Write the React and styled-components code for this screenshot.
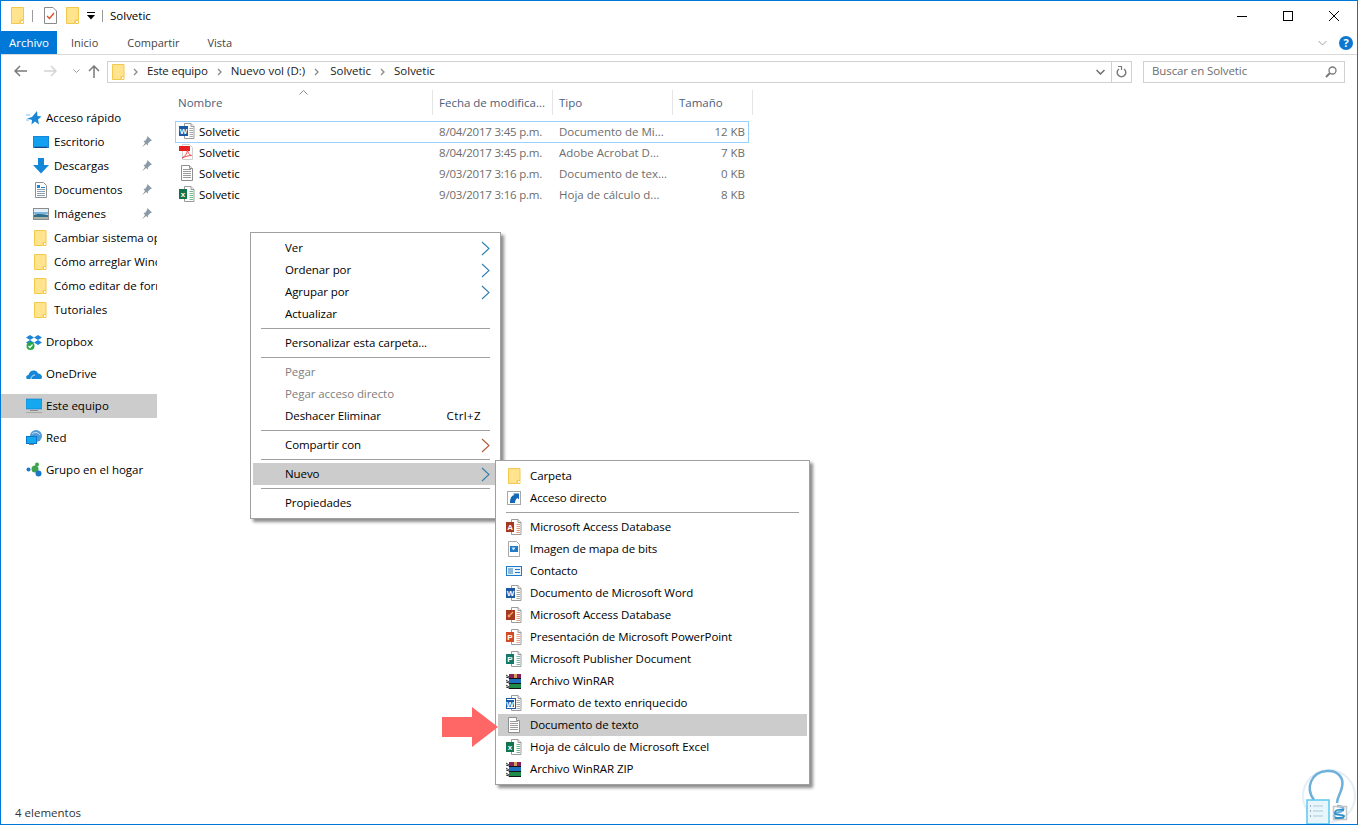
import React from 'react';
import styled, { createGlobalStyle } from 'styled-components';

const GlobalStyle = createGlobalStyle`
  html, body {
    margin: 0;
    padding: 0;
    background: #fff;
  }
  * {
    box-sizing: border-box;
  }
`;

const Window = styled.div`
  position: relative;
  width: 1358px;
  height: 825px;
  overflow: hidden;
  display: flex;
  flex-direction: column;
  background: #fff;
  border: 1px solid #0078d7;
  font-family: 'Open Sans', 'Noto Sans', sans-serif;
  font-size: 11.5px;
  color: #000;
`;

const TitleBar = styled.div`
  height: 30px;
  display: flex;
  align-items: center;
  flex: none;
  padding-bottom: 1px;
`;

const QuickItem = styled.span`
  display: flex;
  margin-left: ${(p) => p.$left || 0}px;
  flex: none;
`;

const QuickSep = styled.span`
  width: 1px;
  height: 12px;
  background: #9a9a9a;
  margin-left: ${(p) => p.$left}px;
`;

const Title = styled.span`
  margin-left: 7px;
  padding-bottom: 1px;
`;

const WinControls = styled.div`
  display: flex;
  margin-left: auto;
  align-self: stretch;
`;

const WinButton = styled.span`
  width: 46px;
  display: flex;
  align-items: center;
  justify-content: center;
`;

const RibbonTabs = styled.div`
  height: 24px;
  display: flex;
  align-items: center;
  flex: none;
  border-bottom: 1px solid #dadada;
`;

const ArchivoTab = styled.span`
  width: 56px;
  height: 23px;
  background: #0078d7;
  color: #fff;
  display: flex;
  align-items: center;
  justify-content: center;
`;

const RibbonTab = styled.span`
  color: #444;
  font-size: 11px;
  margin-left: ${(p) => p.$left}px;
`;

const RibbonEnd = styled.div`
  margin-left: auto;
  display: flex;
  align-items: center;
  gap: 12px;
  padding-right: 4px;
`;

const HelpDot = styled.span`
  width: 14px;
  height: 14px;
  border-radius: 50%;
  background: #0a78d0;
  color: #fff;
  font-weight: 700;
  font-size: 11px;
  line-height: 14px;
  text-align: center;
`;

const AddressRow = styled.div`
  height: 33px;
  flex: none;
  display: flex;
  align-items: flex-start;
  padding-top: 6px;
`;

const NavArrows = styled.div`
  width: 106px;
  height: 22px;
  flex: none;
  display: flex;
  align-items: center;
  padding-bottom: 2px;
`;

const NavArrow = styled.span`
  display: flex;
  margin-left: ${(p) => p.$left}px;
`;

const AddressBox = styled.div`
  width: 1025px;
  height: 22px;
  flex: none;
  border: 1px solid #d0d0d0;
  display: flex;
  align-items: center;
  padding: 0 0 1px 4px;
  gap: 9px;
`;

const AddressFolder = styled.span`
  display: flex;
  margin-right: -1px;
`;

const Crumb = styled.span`
  color: #1a1a1a;
  padding-bottom: 2px;
  margin-left: ${(p) => p.$left || 0}px;
  letter-spacing: ${(p) => (p.$tight ? '-0.2px' : '0')};
`;

const AddressEnd = styled.div`
  margin-left: auto;
  display: flex;
  align-items: center;
  align-self: stretch;
  margin-bottom: -1px;
`;

const AddressDrop = styled.span`
  width: 20px;
  display: flex;
  justify-content: center;
  padding-right: 2px;
`;

const AddressRefresh = styled.span`
  width: 20px;
  align-self: stretch;
  display: flex;
  align-items: center;
  justify-content: center;
  border-left: 1px solid #d0d0d0;
`;

const SearchBox = styled.div`
  width: 202px;
  height: 22px;
  flex: none;
  margin-left: 11px;
  border: 1px solid #d0d0d0;
  display: flex;
  align-items: center;
  justify-content: space-between;
  padding: 0 7px 1px 8px;
  color: #6d6d6d;
`;

const SearchText = styled.span`
  padding-bottom: 2px;
  letter-spacing: -0.1px;
`;

const Body = styled.div`
  flex: 1;
  min-height: 0;
  display: flex;
`;

const NavPane = styled.nav`
  width: 156px;
  flex: none;
  padding-top: 18px;
  overflow: hidden;
`;

const NavGroup = styled.div`
  margin-bottom: 8px;
`;

const NavRow = styled.div`
  height: 24px;
  display: flex;
  align-items: center;
  padding-left: ${(p) => (p.$sub ? 31 : 25)}px;
  background: ${(p) => (p.$selected ? '#cccccc' : 'transparent')};
`;

const NavIcon = styled.span`
  width: ${(p) => (p.$sub ? 17 : 15)}px;
  margin-right: 5px;
  display: flex;
  justify-content: center;
  flex: none;
`;

const NavLabel = styled.span`
  flex: 1;
  min-width: 0;
  overflow: hidden;
  white-space: nowrap;
  padding-bottom: 2px;
`;

const PinSlot = styled.span`
  display: flex;
  margin-right: 5px;
  margin-left: 4px;
  flex: none;
`;

const FilePane = styled.main`
  flex: 1;
  padding: 2px 0 0 15px;
`;

const HeaderRow = styled.div`
  position: relative;
  width: 581px;
  height: 25px;
  display: grid;
  grid-template-columns: 261px 120px 120px 80px;
`;

const HeaderCell = styled.div`
  border-right: 1px solid #e5e5e5;
  padding-left: 6px;
  line-height: 25px;
  color: #4c607a;
`;

const SortCaret = styled.svg`
  position: absolute;
  left: 127px;
  top: 0;
`;

const FileRows = styled.div`
  margin-top: 6px;
`;

const FileRow = styled.div`
  width: 574px;
  height: 22px;
  margin-left: 3px;
  margin-bottom: -1px;
  padding-bottom: 2px;
  display: grid;
  grid-template-columns: 257px 120px 120px 1fr;
  align-items: center;
  border: 1px solid ${(p) => (p.$selected ? '#99d1ff' : 'transparent')};
`;

const FileName = styled.div`
  display: flex;
  align-items: center;
  gap: 4px;
  padding-left: 3px;
`;

const FileMeta = styled.div`
  color: #6d6d6d;
  padding-left: 6px;
  white-space: nowrap;
  letter-spacing: ${(p) => (p.$tight ? '-0.2px' : '0')};
`;

const FileSize = styled.div`
  color: #6d6d6d;
  text-align: right;
  padding-right: 3px;
`;

const StatusBar = styled.div`
  height: 22px;
  flex: none;
  display: flex;
  align-items: center;
  padding: 0 0 2px 14px;
  color: #333;
`;

const Menu = styled.div`
  position: absolute;
  left: ${(p) => p.$x}px;
  top: ${(p) => p.$y}px;
  width: ${(p) => p.$w}px;
  background: #fff;
  border: 1px solid #a0a0a0;
  padding: 4px 0;
  box-shadow: 3px 3px 3px rgba(0, 0, 0, 0.45);
  letter-spacing: -0.08px;
`;

const MenuRow = styled.div`
  height: 22px;
  margin: 0 2px;
  display: flex;
  align-items: center;
  padding-left: ${(p) => (p.$icon ? 8 : 32)}px;
  background: ${(p) => (p.$active ? '#cccccc' : 'transparent')};
  color: ${(p) => (p.$disabled ? '#808080' : '#000')};
`;

const MenuText = styled.span`
  padding-bottom: 2px;
`;

const MenuIcon = styled.span`
  width: 16px;
  margin-right: 8px;
  display: flex;
  justify-content: center;
  flex: none;
`;

const Shortcut = styled.span`
  margin-left: auto;
  margin-right: 17px;
  padding-bottom: 2px;
  letter-spacing: 0.4px;
`;

const MenuChevron = styled.svg`
  margin-left: auto;
  margin-right: 8px;
`;

const MenuSep = styled.div`
  height: 1px;
  margin: 3px 10px;
  background: #a0a0a0;
`;

const CalloutArrow = styled.svg`
  position: absolute;
  left: 440px;
  top: 705px;
`;

const Watermark = styled.svg`
  position: absolute;
  right: 0;
  bottom: 0;
`;

/* drawn icons, 16 box unless noted */
const Svg = ({ w = 16, h = 16, children }) => (
  <svg width={w} height={h} viewBox={`0 0 ${w} ${h}`} style={{ flex: 'none', display: 'block' }}>
    {children}
  </svg>
);

const FolderIcon = ({ big }) => (
  <Svg w={13} h={big ? 17 : 16}>
    <path
      d={big ? 'M.5.5h12v12.5h-3.5v3.5h-8.5z' : 'M.5.5h11.5v12h-3v3h-8.5z'}
      fill="#ffe48d"
      stroke="#f3c84f"
    />
    <path d={big ? 'M9.5 16.5v-3h3v3z' : 'M9.5 15.5v-3h2.5v3z'} fill="#fff" stroke="#f3c84f" />
  </Svg>
);

const PageBase = ({ x = 5.5, lines = '#a8a8a8' }) => (
  <>
    <path d={`M${x} .5h6.5l3 3v12h-9.5z`} fill="#fff" stroke="#9c9c9c" />
    <path d={`M${x + 6.5} .5v3h3`} fill="#eee" stroke="#9c9c9c" />
    {[5, 7, 9, 11, 13].map((y) => (
      <rect key={y} x={x + 5} y={y} width={3.5} height={1} fill={lines} />
    ))}
  </>
);

const LetterTile = ({ fill, letter, y = 3, h = 10, w = 8 }) => (
  <>
    <rect x={0} y={y} width={w} height={h} fill={fill} />
    <text
      x={w / 2}
      y={y + h / 2 + 3}
      textAnchor="middle"
      fontFamily="Liberation Sans, sans-serif"
      fontWeight="700"
      fontSize="8"
      fill="#fff"
    >
      {letter}
    </text>
  </>
);

const WordIcon = () => (
  <Svg>
    <PageBase />
    <LetterTile fill="#1d5aa5" letter="W" w={9} />
  </Svg>
);

const ExcelIcon = () => (
  <Svg>
    <PageBase lines="#6fb98f" />
    <LetterTile fill="#12744a" letter="x" />
  </Svg>
);

const AccessIcon = () => (
  <Svg>
    <PageBase lines="#e59a78" />
    <LetterTile fill="#a5381f" letter="A" />
  </Svg>
);

const PowerPointIcon = () => (
  <Svg>
    <PageBase lines="#eba583" />
    <LetterTile fill="#d24a26" letter="P" />
  </Svg>
);

const AccessKeyIcon = () => (
  <Svg>
    <PageBase lines="#e59a78" />
    <rect x={0} y={3} width={9} height={10} fill="#a5381f" />
    <circle cx={3} cy={9} r={1.4} fill="#f4a460" />
    <path d="M4 8l3-3" stroke="#f4a460" strokeWidth="1.4" />
  </Svg>
);

const PublisherIcon = () => (
  <Svg>
    <PageBase lines="#7fb8a8" />
    <LetterTile fill="#0f7a6a" letter="P" />
  </Svg>
);

const RichTextIcon = () => (
  <Svg>
    <PageBase />
    <rect x={0.5} y={3.5} width={9} height={10} fill="#fff" stroke="#1d5aa5" />
    <LetterTile fill="#1d5aa5" letter="W" y={5} h={7} w={8} />
  </Svg>
);

const PdfIcon = () => (
  <Svg>
    <path d="M3.5.5h7l3 3v12h-10z" fill="#fff" stroke="#d0d0d0" />
    <rect x={0} y={2} width={11} height={5} fill="#e81f1f" />
    <path d="M3 14c3-1 5-5 5.500-8 .5 3 2 5 4 5.500-3 0-6 1-9.500 2.500z" fill="none" stroke="#ef4f4f" />
  </Svg>
);

const TextDocIcon = () => (
  <Svg>
    <path d="M2.500.5h8l3 3v12h-11z" fill="#fff" stroke="#8f8f8f" />
    <path d="M10.500.5v3h3" fill="#eee" stroke="#8f8f8f" />
    {[4, 6, 8, 10, 12].map((y) => (
      <rect key={y} x={4} y={y} width={8} height={1} fill="#9c9c9c" />
    ))}
  </Svg>
);

const BitmapIcon = () => (
  <Svg>
    <path d="M2.500.5h8l3 3v12h-11z" fill="#fff" stroke="#a8a8a8" />
    <rect x={4} y={5} width={8} height={6} fill="#1f78c8" />
    <path d="M5.500 6.500l4 0-2 3z" fill="#dcecf8" />
  </Svg>
);

const ContactIcon = () => (
  <Svg>
    <rect x={0.5} y={3.5} width={15} height={9} fill="#eaf4fc" stroke="#1f78c8" />
    <rect x={2} y={5} width={5} height={6} fill="#8cb8d8" />
    <rect x={9} y={6} width={5} height={1} fill="#1f78c8" />
    <rect x={9} y={9} width={5} height={1} fill="#1f78c8" />
  </Svg>
);

const ShortcutIcon = () => (
  <Svg>
    <rect x={1.5} y={1.5} width={13} height={13} fill="#fff" stroke="#a8a8a8" />
    <path d="M4 13c0-5 1.500-7.500 4.500-8L7 3.500h6v6L11.500 8C10 9 9 10.500 9 13z" fill="#1467b4" />
  </Svg>
);

const RarIcon = () => (
  <Svg>
    <rect x={3} y={1} width={12} height={4} fill="#8a1f5a" />
    <rect x={3} y={6} width={12} height={4} fill="#1f6fc0" />
    <rect x={3} y={11} width={12} height={4} fill="#1f8a4a" />
    <rect x={3} y={5} width={12} height={1} fill="#141414" />
    <rect x={3} y={10} width={12} height={1} fill="#141414" />
    <rect x={3} y={15} width={12} height={1} fill="#141414" />
    <rect x={8} y={1} width={3} height={4} fill="#d0a060" />
    <path d="M0 2l3 2M0 4l3 1M0 7l3 2M0 9l3 1M0 12l3 2M0 14l3 1" stroke="#333" />
  </Svg>
);

const StarIcon = () => (
  <Svg>
    <path d="M11 1l.5 5 4 .5-3.500 3 1 5L9 11.500 5.500 14.500 6 10 1 8.500l5-1.500z" fill="#1a86d8" />
    <path d="M0 5h4M0 10h3" stroke="#7cc0ee" />
  </Svg>
);

const DesktopIcon = () => (
  <Svg>
    <rect x={0} y={2} width={16} height={12} fill="#1a86d8" />
    <rect x={1} y={3} width={14} height={9} fill="#14a0f0" />
    <rect x={2} y={13} width={12} height={1} fill="#0a4a80" />
  </Svg>
);

const DownloadsIcon = () => (
  <Svg>
    <path d="M5 0h6v7h5l-8 8.500L0 7h5z" fill="#1487d8" />
  </Svg>
);

const DocsIcon = () => (
  <Svg>
    <path d="M2.500.500h8l3 3v12h-11z" fill="#fff" stroke="#8f8f8f" />
    <rect x={4} y={3} width={3} height={3} fill="#1a86d8" />
    <rect x={8} y={5} width={4} height={1} fill="#1a86d8" />
    {[7, 9, 11, 13].map((y) => (
      <rect key={y} x={4} y={y} width={8} height={1} fill="#8aa0b0" />
    ))}
  </Svg>
);

const PicturesIcon = () => (
  <Svg>
    <rect x={0.5} y={2.500} width={15} height={11} fill="#e4f0f8" stroke="#8c8c8c" />
    <path d="M1 6h14v2H1z" fill="#7db4dc" />
    <path d="M1 9c3-1.500 8-1 14 0v2H1z" fill="#2f6f8c" />
    <rect x={1} y={11} width={14} height={2} fill="#a8b4a8" />
  </Svg>
);

const DropboxIcon = () => (
  <Svg>
    <path d="M4 1l4 2.500-4 2.500-4-2.500zM12 1l4 2.500-4 2.500-4-2.500zM4 6l4 2.500L4 11 0 8.500zM12 6l4 2.500-4 2.500-4-2.500z" fill="#1a86d8" />
    <circle cx={4.500} cy={12} r={4} fill="#27a844" />
    <path d="M2.500 12l1.500 1.500 2.500-3" fill="none" stroke="#fff" strokeWidth="1.200" />
  </Svg>
);

const OneDriveIcon = () => (
  <Svg>
    <path d="M1 13c-1.500-1-1-4 1.500-4 .5-3 3-5 6-4.500 2 .3 3 1.500 3.500 3 2.500 0 4 2 4 3.500 0 1-.5 2-1.500 2z" fill="#1487d8" />
    <path d="M5 13c0-2 1.500-4 4-4" fill="none" stroke="#fff" strokeWidth="0.800" />
  </Svg>
);

const MonitorIcon = () => (
  <Svg>
    <rect x={0} y={1} width={16} height={10} fill="#14a8f0" stroke="#0a78c8" strokeWidth="0.600" />
    <rect x={4} y={12} width={8} height={1} fill="#8a8a8a" />
    <rect x={0} y={14} width={16} height={1} fill="#a8a8a8" />
  </Svg>
);

const NetworkIcon = () => (
  <Svg>
    <circle cx={10} cy={6} r={6} fill="#4f9ad8" />
    <path d="M6 4c2-2 6-2 8 1" stroke="#cfe6f5" fill="none" />
    <rect x={0.500} y={6.500} width={10} height={7} fill="#14a8f0" stroke="#0a78c8" />
    <rect x={3} y={14} width={5} height={1} fill="#8a8a8a" />
  </Svg>
);

const HomegroupIcon = () => (
  <Svg>
    <circle cx={2.500} cy={7.500} r={2} fill="#1a78c8" />
    <circle cx={9} cy={7} r={3.500} fill="#3fa34d" />
    <circle cx={11} cy={2.500} r={2} fill="#3fa34d" />
    <circle cx={12.500} cy={11.500} r={3} fill="#1a78c8" />
  </Svg>
);

const PinIcon = () => (
  <Svg w={11} h={12}>
    <path d="M6.500 0l4.500 4.500-1.500.5-2.500 2.500 0 2L5 8 1 11.500l3-4.500-1.500-2 2-.5L6 2z" fill="#8c9aa5" />
  </Svg>
);

const TaskDocIcon = () => (
  <Svg w={13} h={17}>
    <path d="M.5.5h8.500l3.500 3.500v12.500h-12z" fill="#fff" stroke="#8a8a8a" />
    <path d="M3 9l2.500 2.500L10 6" fill="none" stroke="#e04a1f" strokeWidth="1.300" />
  </Svg>
);

const ChevronRight = ({ color = '#8a8a8a' }) => (
  <Svg w={5} h={8}>
    <path d="M1 1l3 3-3 3" fill="none" stroke={color} strokeWidth="1.300" />
  </Svg>
);

const MenuArrow = ({ color = '#2f7fae' }) => (
  <MenuChevron width="9" height="15" viewBox="0 0 9 15">
    <path d="M1 1l7 6.500L1 14" fill="none" stroke={color} strokeWidth="1.100" />
  </MenuChevron>
);

const contextTop = [
  [
    { label: 'Ver', arrow: true },
    { label: 'Ordenar por', arrow: true },
    { label: 'Agrupar por', arrow: true },
    { label: 'Actualizar' },
  ],
  [{ label: 'Personalizar esta carpeta...' }],
  [
    { label: 'Pegar', disabled: true },
    { label: 'Pegar acceso directo', disabled: true },
    { label: 'Deshacer Eliminar', shortcut: 'Ctrl+Z' },
  ],
  [{ label: 'Compartir con', arrow: true, arrowColor: '#b0583a' }],
  [{ label: 'Nuevo', arrow: true, active: true }],
  [{ label: 'Propiedades' }],
];

const newTop = [
  { label: 'Carpeta', icon: <FolderIcon /> },
  { label: 'Acceso directo', icon: <ShortcutIcon /> },
];

const newItems = [
  { label: 'Microsoft Access Database', icon: <AccessIcon /> },
  { label: 'Imagen de mapa de bits', icon: <BitmapIcon /> },
  { label: 'Contacto', icon: <ContactIcon /> },
  { label: 'Documento de Microsoft Word', icon: <WordIcon /> },
  { label: 'Microsoft Access Database', icon: <AccessKeyIcon /> },
  { label: 'Presentación de Microsoft PowerPoint', icon: <PowerPointIcon /> },
  { label: 'Microsoft Publisher Document', icon: <PublisherIcon /> },
  { label: 'Archivo WinRAR', icon: <RarIcon /> },
  { label: 'Formato de texto enriquecido', icon: <RichTextIcon /> },
  { label: 'Documento de texto', icon: <TextDocIcon />, active: true },
  { label: 'Hoja de cálculo de Microsoft Excel', icon: <ExcelIcon /> },
  { label: 'Archivo WinRAR ZIP', icon: <RarIcon /> },
];

const files = [
  { icon: <WordIcon />, date: '8/04/2017 3:45 p.m.', type: 'Documento de Mi...', size: '12 KB', selected: true },
  { icon: <PdfIcon />, date: '8/04/2017 3:45 p.m.', type: 'Adobe Acrobat D...', size: '7 KB' },
  { icon: <TextDocIcon />, date: '9/03/2017 3:16 p.m.', type: 'Documento de tex...', size: '0 KB' },
  { icon: <ExcelIcon />, date: '9/03/2017 3:16 p.m.', type: 'Hoja de cálculo d...', size: '8 KB' },
];

const quickAccess = [
  { label: 'Escritorio', icon: <DesktopIcon />, pin: true },
  { label: 'Descargas', icon: <DownloadsIcon />, pin: true },
  { label: 'Documentos', icon: <DocsIcon />, pin: true },
  { label: 'Imágenes', icon: <PicturesIcon />, pin: true },
  { label: 'Cambiar sistema op', icon: <FolderIcon /> },
  { label: 'Cómo arreglar Wind', icon: <FolderIcon /> },
  { label: 'Cómo editar de form', icon: <FolderIcon /> },
  { label: 'Tutoriales', icon: <FolderIcon /> },
];

const places = [
  { label: 'Dropbox', icon: <DropboxIcon /> },
  { label: 'OneDrive', icon: <OneDriveIcon /> },
  { label: 'Este equipo', icon: <MonitorIcon />, selected: true },
  { label: 'Red', icon: <NetworkIcon /> },
  { label: 'Grupo en el hogar', icon: <HomegroupIcon /> },
];

function TitleRow() {
  return (
    <TitleBar>
      <QuickItem $left={10}>
        <FolderIcon big />
      </QuickItem>
      <QuickSep $left={8} />
      <QuickItem $left={11}>
        <TaskDocIcon />
      </QuickItem>
      <QuickItem $left={9}>
        <FolderIcon big />
      </QuickItem>
      <QuickItem $left={8}>
        <Svg w={8} h={8}>
          <rect x={0} y={0} width={8} height={1} fill="#000" />
          <path d="M0 3h8L4 7.500z" fill="#000" />
        </Svg>
      </QuickItem>
      <QuickSep $left={7} />
      <Title>Solvetic</Title>
      <WinControls>
        <WinButton>
          <Svg w={10} h={10}>
            <rect x={0} y={5} width={10} height={1} fill="#000" />
          </Svg>
        </WinButton>
        <WinButton>
          <Svg w={10} h={10}>
            <rect x={0.5} y={0.5} width={9} height={9} fill="none" stroke="#000" />
          </Svg>
        </WinButton>
        <WinButton>
          <Svg w={10} h={10}>
            <path d="M0 0l10 10M10 0L0 10" stroke="#000" />
          </Svg>
        </WinButton>
      </WinControls>
    </TitleBar>
  );
}

function Ribbon() {
  return (
    <RibbonTabs>
      <ArchivoTab>Archivo</ArchivoTab>
      <RibbonTab $left={14}>Inicio</RibbonTab>
      <RibbonTab $left={29}>Compartir</RibbonTab>
      <RibbonTab $left={28}>Vista</RibbonTab>
      <RibbonEnd>
        <Svg w={9} h={6}>
          <path d="M.5 1l4 4 4-4" fill="none" stroke="#a0a0a0" />
        </Svg>
        <HelpDot>?</HelpDot>
      </RibbonEnd>
    </RibbonTabs>
  );
}

function Address() {
  return (
    <AddressRow>
      <NavArrows>
        <NavArrow $left={13}>
          <Svg w={13} h={12}>
            <path d="M6 1L1 6l5 5M1 6h12" fill="none" stroke="#7a7a7a" strokeWidth="1.500" />
          </Svg>
        </NavArrow>
        <NavArrow $left={17}>
          <Svg w={13} h={12}>
            <path d="M7 1l5 5-5 5M12 6H0" fill="none" stroke="#d4d4d4" strokeWidth="1.500" />
          </Svg>
        </NavArrow>
        <NavArrow $left={16}>
          <Svg w={7} h={5}>
            <path d="M.5.500L3.500 3.500 6.500.500" fill="none" stroke="#a0a0a0" />
          </Svg>
        </NavArrow>
        <NavArrow $left={8}>
          <Svg w={12} h={13}>
            <path d="M1 6l5-5 5 5M6 1v12" fill="none" stroke="#7a7a7a" strokeWidth="1.500" />
          </Svg>
        </NavArrow>
      </NavArrows>
      <AddressBox>
        <AddressFolder>
          <FolderIcon />
        </AddressFolder>
        <ChevronRight />
        <Crumb $tight>Este equipo</Crumb>
        <ChevronRight />
        <Crumb>Nuevo vol (D:)</Crumb>
        <ChevronRight />
        <Crumb $left={2}>Solvetic</Crumb>
        <ChevronRight />
        <Crumb>Solvetic</Crumb>
        <AddressEnd>
          <AddressDrop>
            <Svg w={9} h={6}>
              <path d="M.5 1l4 4 4-4" fill="none" stroke="#6d6d6d" strokeWidth="1.500" />
            </Svg>
          </AddressDrop>
          <AddressRefresh>
            <Svg w={11} h={12}>
              <path d="M3 3a4.300 4.300 0 1 0 5 0" fill="none" stroke="#7a7a7a" strokeWidth="1.500" />
              <path d="M2 .500h3.500V4" fill="none" stroke="#7a7a7a" strokeWidth="1.200" />
            </Svg>
          </AddressRefresh>
        </AddressEnd>
      </AddressBox>
      <SearchBox>
        <SearchText>Buscar en Solvetic</SearchText>
        <Svg w={12} h={12}>
          <circle cx={7.500} cy={4.500} r={3.500} fill="none" stroke="#7a7a7a" strokeWidth="1.300" />
          <path d="M5 7l-4 4" stroke="#7a7a7a" strokeWidth="2" />
        </Svg>
      </SearchBox>
    </AddressRow>
  );
}

function Navigation() {
  return (
    <NavPane>
      <NavGroup>
        <NavRow>
          <NavIcon>
            <StarIcon />
          </NavIcon>
          <NavLabel>Acceso rápido</NavLabel>
        </NavRow>
        {quickAccess.map((item) => (
          <NavRow $sub key={item.label}>
            <NavIcon $sub>{item.icon}</NavIcon>
            <NavLabel>{item.label}</NavLabel>
            {item.pin && (
              <PinSlot>
                <PinIcon />
              </PinSlot>
            )}
          </NavRow>
        ))}
      </NavGroup>
      {places.map((item) => (
        <NavGroup key={item.label}>
          <NavRow $selected={item.selected}>
            <NavIcon>{item.icon}</NavIcon>
            <NavLabel>{item.label}</NavLabel>
          </NavRow>
        </NavGroup>
      ))}
    </NavPane>
  );
}

function FileList() {
  return (
    <FilePane>
      <HeaderRow>
        <SortCaret width="9" height="5" viewBox="0 0 9 5">
          <path d="M.5 4.500l4-4 4 4" fill="none" stroke="#8a8a8a" />
        </SortCaret>
        <HeaderCell>Nombre</HeaderCell>
        <HeaderCell>Fecha de modifica...</HeaderCell>
        <HeaderCell>Tipo</HeaderCell>
        <HeaderCell>Tamaño</HeaderCell>
      </HeaderRow>
      <FileRows>
        {files.map((file) => (
          <FileRow $selected={file.selected} key={file.type}>
            <FileName>
              {file.icon}
              Solvetic
            </FileName>
            <FileMeta $tight>{file.date}</FileMeta>
            <FileMeta>{file.type}</FileMeta>
            <FileSize>{file.size}</FileSize>
          </FileRow>
        ))}
      </FileRows>
    </FilePane>
  );
}

function ContextMenu() {
  return (
    <Menu $x={249} $y={231} $w={251}>
      {contextTop.map((group, i) => (
        <React.Fragment key={group[0].label}>
          {i > 0 && <MenuSep />}
          {group.map((item) => (
            <MenuRow $active={item.active} $disabled={item.disabled} key={item.label}>
              <MenuText>{item.label}</MenuText>
              {item.shortcut && <Shortcut>{item.shortcut}</Shortcut>}
              {item.arrow && <MenuArrow color={item.arrowColor} />}
            </MenuRow>
          ))}
        </React.Fragment>
      ))}
    </Menu>
  );
}

function NewMenu() {
  const renderRow = (item, i) => (
    <MenuRow $icon $active={item.active} key={i}>
      <MenuIcon>{item.icon}</MenuIcon>
      <MenuText>{item.label}</MenuText>
    </MenuRow>
  );
  return (
    <Menu $x={494} $y={459} $w={315}>
      {newTop.map(renderRow)}
      <MenuSep />
      {newItems.map(renderRow)}
    </Menu>
  );
}

export default function App() {
  return (
    <Window>
      <GlobalStyle />
      <TitleRow />
      <Ribbon />
      <Address />
      <Body>
        <Navigation />
        <FileList />
      </Body>
      <StatusBar>4 elementos</StatusBar>
      <ContextMenu />
      <NewMenu />
      <CalloutArrow width="58" height="42" viewBox="0 0 58 42">
        <path d="M1 11h30V1l26 20-26 20V31H1z" fill="#ff6666" />
      </CalloutArrow>
      <Watermark width="56" height="58" viewBox="0 0 56 58">
        <circle cx="28" cy="30" r="26" fill="#fff" stroke="#e4eef6" strokeWidth="2" />
        <path
          d="M13 34C4 22 10 6 26 5c12-1 17 8 15 16-1 6-5 10-5 16M36 40c6 0 7 2 6 4-2 3-9 2-9 6 0 2 4 3 10 2"
          fill="none"
          stroke="#6fb0da"
          strokeWidth="2.500"
        />
        <rect x="6" y="34" width="22" height="24" fill="#e8f6fc" stroke="#5cc8ee" strokeWidth="1.500" />
        <path d="M12 40h10M12 45h10M12 50h10" stroke="#c0d8e4" strokeWidth="1.500" />
        <path d="M9 40h1M9 45h1M9 50h1" stroke="#7a9ab0" strokeWidth="1.500" />
        <rect x="32.500" y="40.500" width="13" height="13" fill="none" stroke="#c4c4c4" strokeWidth="1.500" />
        <path d="M43 44c-5-1-9 0-9 3s8 1 9 3c0 2-4 2-9 2" fill="none" stroke="#2f8fc8" strokeWidth="1.800" />
      </Watermark>
    </Window>
  );
}
